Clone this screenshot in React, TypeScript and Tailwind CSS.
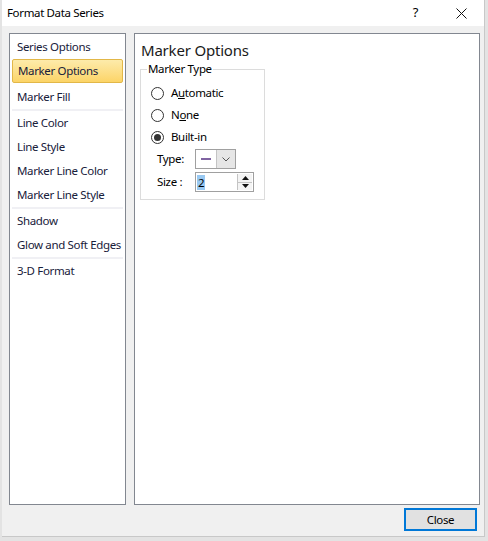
import React from 'react';

const FONT = "font-['Segoe_UI','Noto_Sans',sans-serif] tracking-[-0.35px]";

type NavItem = { label: string; active?: boolean; sepBefore?: boolean; extraTop?: boolean };

const navItems: NavItem[] = [
  { label: 'Series Options' },
  { label: 'Marker Options', active: true },
  { label: 'Marker Fill', extraTop: true },
  { label: 'Line Color', sepBefore: true },
  { label: 'Line Style' },
  { label: 'Marker Line Color' },
  { label: 'Marker Line Style' },
  { label: 'Shadow', sepBefore: true },
  { label: 'Glow and Soft Edges' },
  { label: '3-D Format', sepBefore: true },
];

const Radio: React.FC<{ checked?: boolean; children: React.ReactNode }> = ({ checked, children }) => (
  <div className="flex h-[22px] items-center">
    <span className="ml-[10px] flex h-[13px] w-[13px] items-center justify-center rounded-full border border-[#333] bg-white">
      {checked && <span className="h-[7px] w-[7px] rounded-full bg-[#333]" />}
    </span>
    <span className="ml-[7px] text-[11.5px] text-black">{children}</span>
  </div>
);

export default function App() {
  return (
    <div className={`h-[541px] w-[488px] overflow-hidden whitespace-nowrap bg-[#e3e3e3] ${FONT}`}>
      <div className="ml-[2px] flex h-[537px] w-[483px] flex-col border-r border-b border-[#c8c8c8] bg-[#f0f0f0]">
        {/* Title bar */}
        <div className="flex h-[26px] items-center bg-white pl-[5px]">
          <span className="text-[11.5px] text-black">Format Data Series</span>
          <span className="ml-auto mr-[38px] text-[13px] text-black">?</span>
          <svg width="11" height="11" viewBox="0 0 11 11" className="mr-[17px]">
            <path d="M0.5 0.5 L10.5 10.5 M10.5 0.5 L0.5 10.5" stroke="#111" strokeWidth="1" />
          </svg>
        </div>

        {/* Panels */}
        <div className="mt-[7px] flex gap-[8px] pl-[7px]">
          {/* Left navigation */}
          <div className="h-[472px] w-[117px] border border-[#828790] bg-white px-[2px] pt-[1px]">
            {navItems.map((item) => (
              <React.Fragment key={item.label}>
                {item.sepBefore && <div className="h-[2px] bg-[#f0f0f4]" />}
                <div
                  className={`flex h-[24px] items-center pl-[5px] text-[11.5px] text-[#18203a] ${
                    item.active
                      ? 'rounded-[2px] border border-[#e2b748] bg-gradient-to-b from-[#fdebaa] to-[#fcd466] pl-[4px]'
                      : ''
                  } ${item.extraTop ? 'mt-[2px]' : ''}`}
                >
                  {item.label}
                </div>
              </React.Fragment>
            ))}
          </div>

          {/* Right content */}
          <div className="h-[472px] w-[346px] border border-[#828790] bg-white">
            <div className="ml-[6px] mt-[6px] h-[20px] text-[15px] leading-[20px] tracking-[-0.2px] text-[#1a1a1a]">Marker Options</div>
            <fieldset className="ml-[5px] mt-[1px] w-[125px] border border-[#dcdcdc] pb-[7px]">
              <legend className="ml-[6px] px-[1px] text-[11.5px] leading-[16px] text-black">Marker Type</legend>
              <div className="pt-[5px]">
                <Radio>
                  A<span className="underline">u</span>tomatic
                </Radio>
                <Radio>
                  N<span className="underline">o</span>ne
                </Radio>
                <Radio checked>Built-in</Radio>

                <div className="mt-[1px] flex h-[20px] items-center">
                  <span className="ml-[16px] w-[38px] text-[11.5px] text-black">Type:</span>
                  <div className="flex h-[20px] w-[41px] border border-[#a0a0a0] bg-white">
                    <div className="flex w-[20px] items-center justify-center">
                      <span className="h-[2px] w-[10px] bg-[#8064a2]" />
                    </div>
                    <div className="flex flex-1 items-center justify-center border-l border-[#c4c4c4] bg-[#e6e6e6]">
                      <svg width="8" height="5" viewBox="0 0 8 5">
                        <path d="M0.5 0.5 L4 4 L7.5 0.5" fill="none" stroke="#555" strokeWidth="1" />
                      </svg>
                    </div>
                  </div>
                </div>

                <div className="mt-[3px] flex h-[20px] items-center">
                  <span className="ml-[16px] w-[38px] text-[11.5px] text-black">Size :</span>
                  <div className="flex h-[20px] w-[59px] items-center border border-[#a0a0a0] bg-white">
                    <span className="ml-[1px] bg-[#99c9f2] px-[1px] text-[11.5px] leading-[15px] text-black">2</span>
                    <div className="ml-auto mr-[1px] flex h-[16px] w-[15px] flex-col border-l border-[#c4c4c4]">
                      <div className="flex flex-1 items-center justify-center border-b border-[#c4c4c4] bg-[#f4f4f4]">
                        <svg width="7" height="4" viewBox="0 0 7 4">
                          <path d="M0 4 L3.5 0 L7 4 Z" fill="#111" />
                        </svg>
                      </div>
                      <div className="flex flex-1 items-center justify-center bg-[#f4f4f4]">
                        <svg width="7" height="4" viewBox="0 0 7 4">
                          <path d="M0 0 L3.5 4 L7 0 Z" fill="#111" />
                        </svg>
                      </div>
                    </div>
                  </div>
                </div>
              </div>
            </fieldset>
          </div>
        </div>

        {/* Footer */}
        <div className="mt-[3px] flex justify-end pr-[7px]">
          <button className="flex h-[23px] w-[73px] items-center justify-center border-2 border-[#0078d7] bg-[#e1e1e1] text-[11.5px] text-black">
            Close
          </button>
        </div>
      </div>
    </div>
  );
}
